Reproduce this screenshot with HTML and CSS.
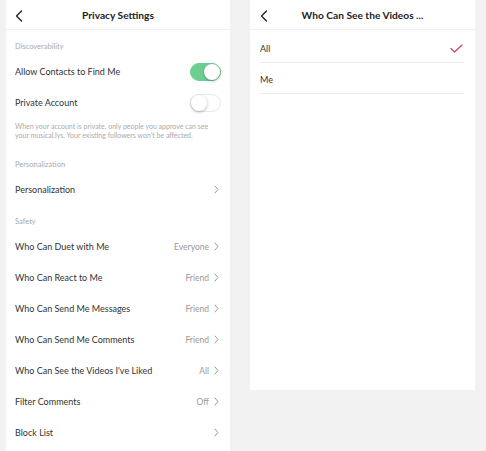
FILE: index.html
```html
<!DOCTYPE html>
<html>
<head>
<meta charset="utf-8">
<link rel="stylesheet" href="styles.css">
</head>
<body>
<div class="screens">
  <section class="panel panel-left">
    <header class="topbar">
      <svg class="back" viewBox="0 0 8 12" width="8" height="12"><path d="M6.5 1 L1.5 6 L6.5 11" fill="none" stroke="#222" stroke-width="1.4" stroke-linecap="round" stroke-linejoin="round"/></svg>
      <h1 class="title">Privacy Settings</h1>
    </header>

    <div class="label first">Discoverability</div>
    <div class="row"><span class="name">Allow Contacts to Find Me</span><span class="toggle on"><span class="knob"></span></span></div>
    <div class="row"><span class="name">Private Account</span><span class="toggle"><span class="knob"></span></span></div>
    <p class="desc">When your account is private, only people you approve can see your musical.lys. Your existing followers won't be affected.</p>

    <div class="label">Personalization</div>
    <div class="row"><span class="name">Personalization</span><span class="end"><svg class="chev" viewBox="0 0 5 9" width="5" height="9"><path d="M1 1 L4 4.5 L1 8" fill="none" stroke="#999" stroke-width="1" stroke-linecap="round" stroke-linejoin="round"/></svg></span></div>

    <div class="label">Safety</div>
    <div class="row"><span class="name">Who Can Duet with Me</span><span class="end"><span class="value">Everyone</span><svg class="chev" viewBox="0 0 5 9" width="5" height="9"><path d="M1 1 L4 4.5 L1 8" fill="none" stroke="#999" stroke-width="1" stroke-linecap="round" stroke-linejoin="round"/></svg></span></div>
    <div class="row"><span class="name">Who Can React to Me</span><span class="end"><span class="value">Friend</span><svg class="chev" viewBox="0 0 5 9" width="5" height="9"><path d="M1 1 L4 4.5 L1 8" fill="none" stroke="#999" stroke-width="1" stroke-linecap="round" stroke-linejoin="round"/></svg></span></div>
    <div class="row"><span class="name">Who Can Send Me Messages</span><span class="end"><span class="value">Friend</span><svg class="chev" viewBox="0 0 5 9" width="5" height="9"><path d="M1 1 L4 4.5 L1 8" fill="none" stroke="#999" stroke-width="1" stroke-linecap="round" stroke-linejoin="round"/></svg></span></div>
    <div class="row"><span class="name">Who Can Send Me Comments</span><span class="end"><span class="value">Friend</span><svg class="chev" viewBox="0 0 5 9" width="5" height="9"><path d="M1 1 L4 4.5 L1 8" fill="none" stroke="#999" stroke-width="1" stroke-linecap="round" stroke-linejoin="round"/></svg></span></div>
    <div class="row"><span class="name">Who Can See the Videos I've Liked</span><span class="end"><span class="value">All</span><svg class="chev" viewBox="0 0 5 9" width="5" height="9"><path d="M1 1 L4 4.5 L1 8" fill="none" stroke="#999" stroke-width="1" stroke-linecap="round" stroke-linejoin="round"/></svg></span></div>
    <div class="row"><span class="name">Filter Comments</span><span class="end"><span class="value">Off</span><svg class="chev" viewBox="0 0 5 9" width="5" height="9"><path d="M1 1 L4 4.5 L1 8" fill="none" stroke="#999" stroke-width="1" stroke-linecap="round" stroke-linejoin="round"/></svg></span></div>
    <div class="row"><span class="name">Block List</span><span class="end"><svg class="chev" viewBox="0 0 5 9" width="5" height="9"><path d="M1 1 L4 4.5 L1 8" fill="none" stroke="#999" stroke-width="1" stroke-linecap="round" stroke-linejoin="round"/></svg></span></div>
  </section>

  <section class="panel panel-right">
    <header class="topbar">
      <svg class="back" viewBox="0 0 8 12" width="8" height="12"><path d="M6.5 1 L1.5 6 L6.5 11" fill="none" stroke="#222" stroke-width="1.4" stroke-linecap="round" stroke-linejoin="round"/></svg>
      <h1 class="title">Who Can See the Videos ...</h1>
    </header>
    <div class="options">
      <div class="option"><span class="name">All</span><svg class="check" viewBox="0 0 13 9" width="13" height="9"><path d="M1 4.5 L4.5 8 L12 1" fill="none" stroke="#c9486f" stroke-width="1.3" stroke-linecap="round" stroke-linejoin="round"/></svg></div>
      <div class="option"><span class="name">Me</span></div>
    </div>
  </section>
</div>
</body>
</html>
```

FILE: styles.css
```css
* { box-sizing: border-box; }
html, body {
  margin: 0;
  padding: 0;
  height: 100%;
  overflow: hidden;
}
body {
  background: #f2f2f2;
  font-family: "Lato", "Liberation Sans", sans-serif;
  color: #333;
}
.screens {
  display: flex;
  align-items: flex-start;
  gap: 20px;
  padding-left: 6px;
}
.panel {
  background: #fff;
  flex: 0 0 auto;
}
.panel-left {
  width: 224px;
  height: 470px;
  padding: 0 9px;
}
.panel-right {
  width: 225px;
  height: 390px;
}
.topbar {
  position: relative;
  height: 30px;
  display: flex;
  align-items: center;
  justify-content: center;
  border-bottom: 1px solid #f0f0f0;
}
.panel-left .topbar { margin: 0 -9px; }
.back {
  position: absolute;
  left: 9px;
  top: 10px;
}
.panel-right .back { left: 10px; }
.title {
  margin: 0;
  font-size: 10.2px;
  font-weight: 700;
  color: #222;
  line-height: 12px;
}
.label {
  font-size: 7.5px;
  line-height: 10px;
  color: #aaa;
  padding-top: 12px;
  padding-bottom: 4px;
}
.row {
  height: 31px;
  display: flex;
  align-items: center;
  justify-content: space-between;
}
.name {
  font-size: 9px;
  color: #333;
}
.end {
  display: flex;
  align-items: center;
  gap: 5px;
  padding-right: 2px;
}
.value {
  font-size: 8.5px;
  color: #999;
}
.chev { display: block; }
.toggle {
  position: relative;
  width: 31px;
  height: 18px;
  border-radius: 9px;
  background: #fff;
  border: 1px solid #e8e8e8;
}
.toggle.on {
  background: #6ccf8f;
  border-color: #6ccf8f;
}
.knob {
  position: absolute;
  top: 0;
  left: 0;
  width: 16px;
  height: 16px;
  border-radius: 50%;
  background: #fff;
  box-shadow: 0 1px 3px rgba(0,0,0,0.3);
}
.toggle.on .knob { left: 13px; }
.desc {
  margin: 0;
  padding: 4px 0 8px;
  font-size: 7px;
  line-height: 9px;
  color: #aaa;
}
.options {
  padding: 2px 11px 0 10px;
}
.option {
  height: 31px;
  display: flex;
  align-items: center;
  justify-content: space-between;
  border-bottom: 1px solid #ececec;
  padding: 2px 1px 0 0;
}
.check { display: block; }
```
